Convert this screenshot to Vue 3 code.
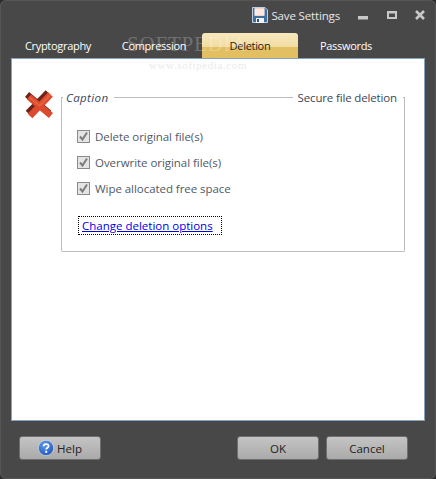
<script setup>
const tabs = [
  { label: 'Cryptography', active: false },
  { label: 'Compression', active: false },
  { label: 'Deletion', active: true },
  { label: 'Passwords', active: false },
]
const options = ['Delete original file(s)', 'Overwrite original file(s)', 'Wipe allocated free space']
</script>

<template>
  <div class="window">
    <header class="titlebar">
      <button class="save">
        <svg width="16" height="16" viewBox="0 0 16 16">
          <path d="M0.5 0.5H13L15.5 3V15.5H0.5Z" fill="#3f6f9f" stroke="#bcd0e4" />
          <rect x="2.5" y="1" width="10" height="8" fill="#f6d2c6" />
          <path d="M2.5 3H12.5M2.5 5H12.5M2.5 7H12.5" stroke="#fff" />
          <rect x="4" y="11" width="8" height="5" fill="#eef2f6" />
          <rect x="5" y="12" width="2" height="3" fill="#33506e" />
        </svg>
        <span>Save Settings</span>
      </button>
      <div class="controls">
        <svg width="10" height="10" viewBox="0 0 10 10"><rect x="0" y="6" width="10" height="3.5" fill="#c8c8c8" /></svg>
        <svg width="10" height="10" viewBox="0 0 10 10"><path fill-rule="evenodd" d="M0 1H10V9H0ZM2 3.5V7H8V3.5Z" fill="#c8c8c8" /></svg>
        <svg width="10" height="10" viewBox="0 0 10 10"><path d="M1 1L9 9M9 1L1 9" stroke="#c8c8c8" stroke-width="2.6" /></svg>
      </div>
    </header>

    <nav class="tabs">
      <div v-for="tab in tabs" :key="tab.label" class="tab" :class="{ active: tab.active }">{{ tab.label }}</div>
    </nav>

    <main class="panel">
      <svg class="cross" width="28" height="30" viewBox="0 0 28 30">
        <path d="M2 4.500L24 23M23 2.500L3 23" fill="none" stroke="#6d231a" stroke-width="6.500" />
        <path d="M4 7L26 25.500M25.500 4.500L5 26" fill="none" stroke="#dc4a2e" stroke-width="6.500" />
        <path d="M4 7L15 16M25.500 4.500L15 15.500" fill="none" stroke="#e8603f" stroke-width="2" />
      </svg>

      <section class="group">
        <div class="group-head">
          <i class="stub"></i>
          <em class="caption">Caption</em>
          <i class="rule"></i>
          <span class="title">Secure file deletion</span>
          <i class="stub end"></i>
        </div>
        <ul class="options">
          <li v-for="o in options" :key="o" class="option">
            <span class="check">
              <svg width="11" height="11" viewBox="0 0 11 11"><path d="M2 5.500L4.500 8.500L9 1.500" fill="none" stroke="#7d7d7d" stroke-width="2" /></svg>
            </span>
            <span>{{ o }}</span>
          </li>
        </ul>
        <a class="link" href="#"><span>Change deletion options</span></a>
      </section>

      <div class="watermark">
        <span class="wm-big">SOFTPEDIA</span>
        <span class="wm-small">www.softpedia.com</span>
      </div>
    </main>

    <footer class="footer">
      <button class="btn">
        <svg width="16" height="16" viewBox="0 0 16 16">
          <defs>
            <radialGradient id="helpfill" cx="0.4" cy="0.3" r="0.8">
              <stop offset="0" stop-color="#5f9cea" />
              <stop offset="1" stop-color="#1c4fb4" />
            </radialGradient>
          </defs>
          <circle cx="8" cy="8" r="7.600" fill="url(#helpfill)" stroke="#d5e2f2" stroke-width="0.6" />
          <path d="M5.600 6.200C5.800 3.400 10.600 3.500 10.600 6C10.600 7.800 8.200 7.800 8.200 9.600" fill="none" stroke="#fff" stroke-width="1.800" />
          <rect x="7.200" y="10.800" width="2" height="2" fill="#fff" />
        </svg>
        <span>Help</span>
      </button>
      <div class="spacer"></div>
      <button class="btn">OK</button>
      <button class="btn">Cancel</button>
    </footer>
  </div>
</template>

<style>
html, body { margin: 0; background: #2b2b2b; }
</style>

<style scoped>
.window {
  box-sizing: border-box;
  width: 436px;
  height: 479px;
  display: flex;
  flex-direction: column;
  padding: 0 11px;
  background: #484848;
  border-radius: 6px;
  box-shadow: inset 0 0 0 1px #555;
  font: 11.5px "Open Sans", "Noto Sans", sans-serif;
  color: #333;
}
.titlebar {
  height: 33px;
  flex: none;
  display: flex;
  justify-content: flex-end;
  align-items: center;
  padding-bottom: 3px;
  box-sizing: border-box;
}
.save {
  display: flex;
  align-items: center;
  gap: 3px;
  padding: 0;
  border: 0;
  background: none;
  color: #e8e8e8;
  font: inherit;
  letter-spacing: -0.15px;
}
.controls {
  display: flex;
  align-items: center;
  gap: 18.500px;
  margin-left: 18px;
}
.tabs {
  height: 25px;
  flex: none;
  display: flex;
  margin-left: -1px;
}
.tab {
  width: 96px;
  display: flex;
  align-items: center;
  justify-content: center;
  padding-bottom: 1px;
  color: #fff;
  box-sizing: border-box;
  font-size: 11px;
  letter-spacing: -0.3px;
}
.tab.active {
  color: #222;
  border-radius: 3px 3px 0 0;
  background: linear-gradient(#f7e8bd 0, #f1dca3 54%, #e2bf62 55%, #e2bf62 100%);
}
.panel {
  position: relative;
  flex: 1;
  box-sizing: border-box;
  display: flex;
  align-items: flex-start;
  gap: 8px;
  padding: 31px 19px 0 13px;
  background: #fff;
  border: 1px solid #86a3bd;
}
.cross { flex: none; }
.group {
  flex: 1;
  height: 155px;
  box-sizing: border-box;
  margin-top: 7px;
  border: 1px solid #bdbdbd;
  border-top: 0;
  border-radius: 0 0 2px 2px;
}
.group-head {
  height: 1px;
  display: flex;
  align-items: center;
  color: #3c4658;
  margin: 0 -1px;
}
.stub { width: 2px; height: 1px; background: #bdbdbd; flex: none; margin-right: 3px; }
.stub.end { margin: 0 0 0 6px; }
.caption { font-style: italic; letter-spacing: 0.4px; }
.title { letter-spacing: -0.15px; }
.rule { flex: 1; height: 1px; background: #bdbdbd; margin: 0 5px; }
.options {
  list-style: none;
  margin: 28px 0 0;
  padding: 0 0 0 15px;
  display: flex;
  flex-direction: column;
  gap: 6px;
}
.option {
  height: 20px;
  display: flex;
  align-items: center;
  gap: 5px;
  color: #4f5a66;
  letter-spacing: -0.05px;
}
.check {
  width: 11px;
  height: 11px;
  border: 1px solid #8a8a8a;
  background: #e4e4e4;
  flex: none;
}
.check svg { display: block; }
.link {
  display: inline-block;
  margin: 18px 0 0 16px;
  padding: 0 8px 0 3px;
  height: 17px;
  line-height: 17px;
  border: 1px dotted #000;
  color: #0000e6;
  text-decoration: underline;
}
.watermark {
  position: absolute;
  left: 115px;
  top: -26px;
  display: flex;
  flex-direction: column;
  pointer-events: none;
}
.wm-big {
  font: 21px "Liberation Serif", serif;
  letter-spacing: 0.8px;
  line-height: 22px;
  color: rgba(255, 255, 255, 0.24);
}
.wm-small {
  font: 11px "Liberation Serif", serif;
  letter-spacing: 0.6px;
  margin: 4px 0 0 22px;
  color: #ebebeb;
}
.footer {
  height: 58px;
  box-sizing: border-box;
  flex: none;
  display: flex;
  align-items: flex-start;
  gap: 7px;
  padding: 15px 17px 0 8px;
}
.spacer { flex: 1; }
.btn {
  width: 82px;
  height: 24px;
  box-sizing: border-box;
  display: flex;
  align-items: center;
  justify-content: center;
  gap: 3px;
  padding: 0;
  border: 1px solid #6f6f6f;
  border-radius: 3px;
  background: linear-gradient(#c4c4c4, #aaaaaa);
  color: #222;
  font: inherit;
}
</style>
